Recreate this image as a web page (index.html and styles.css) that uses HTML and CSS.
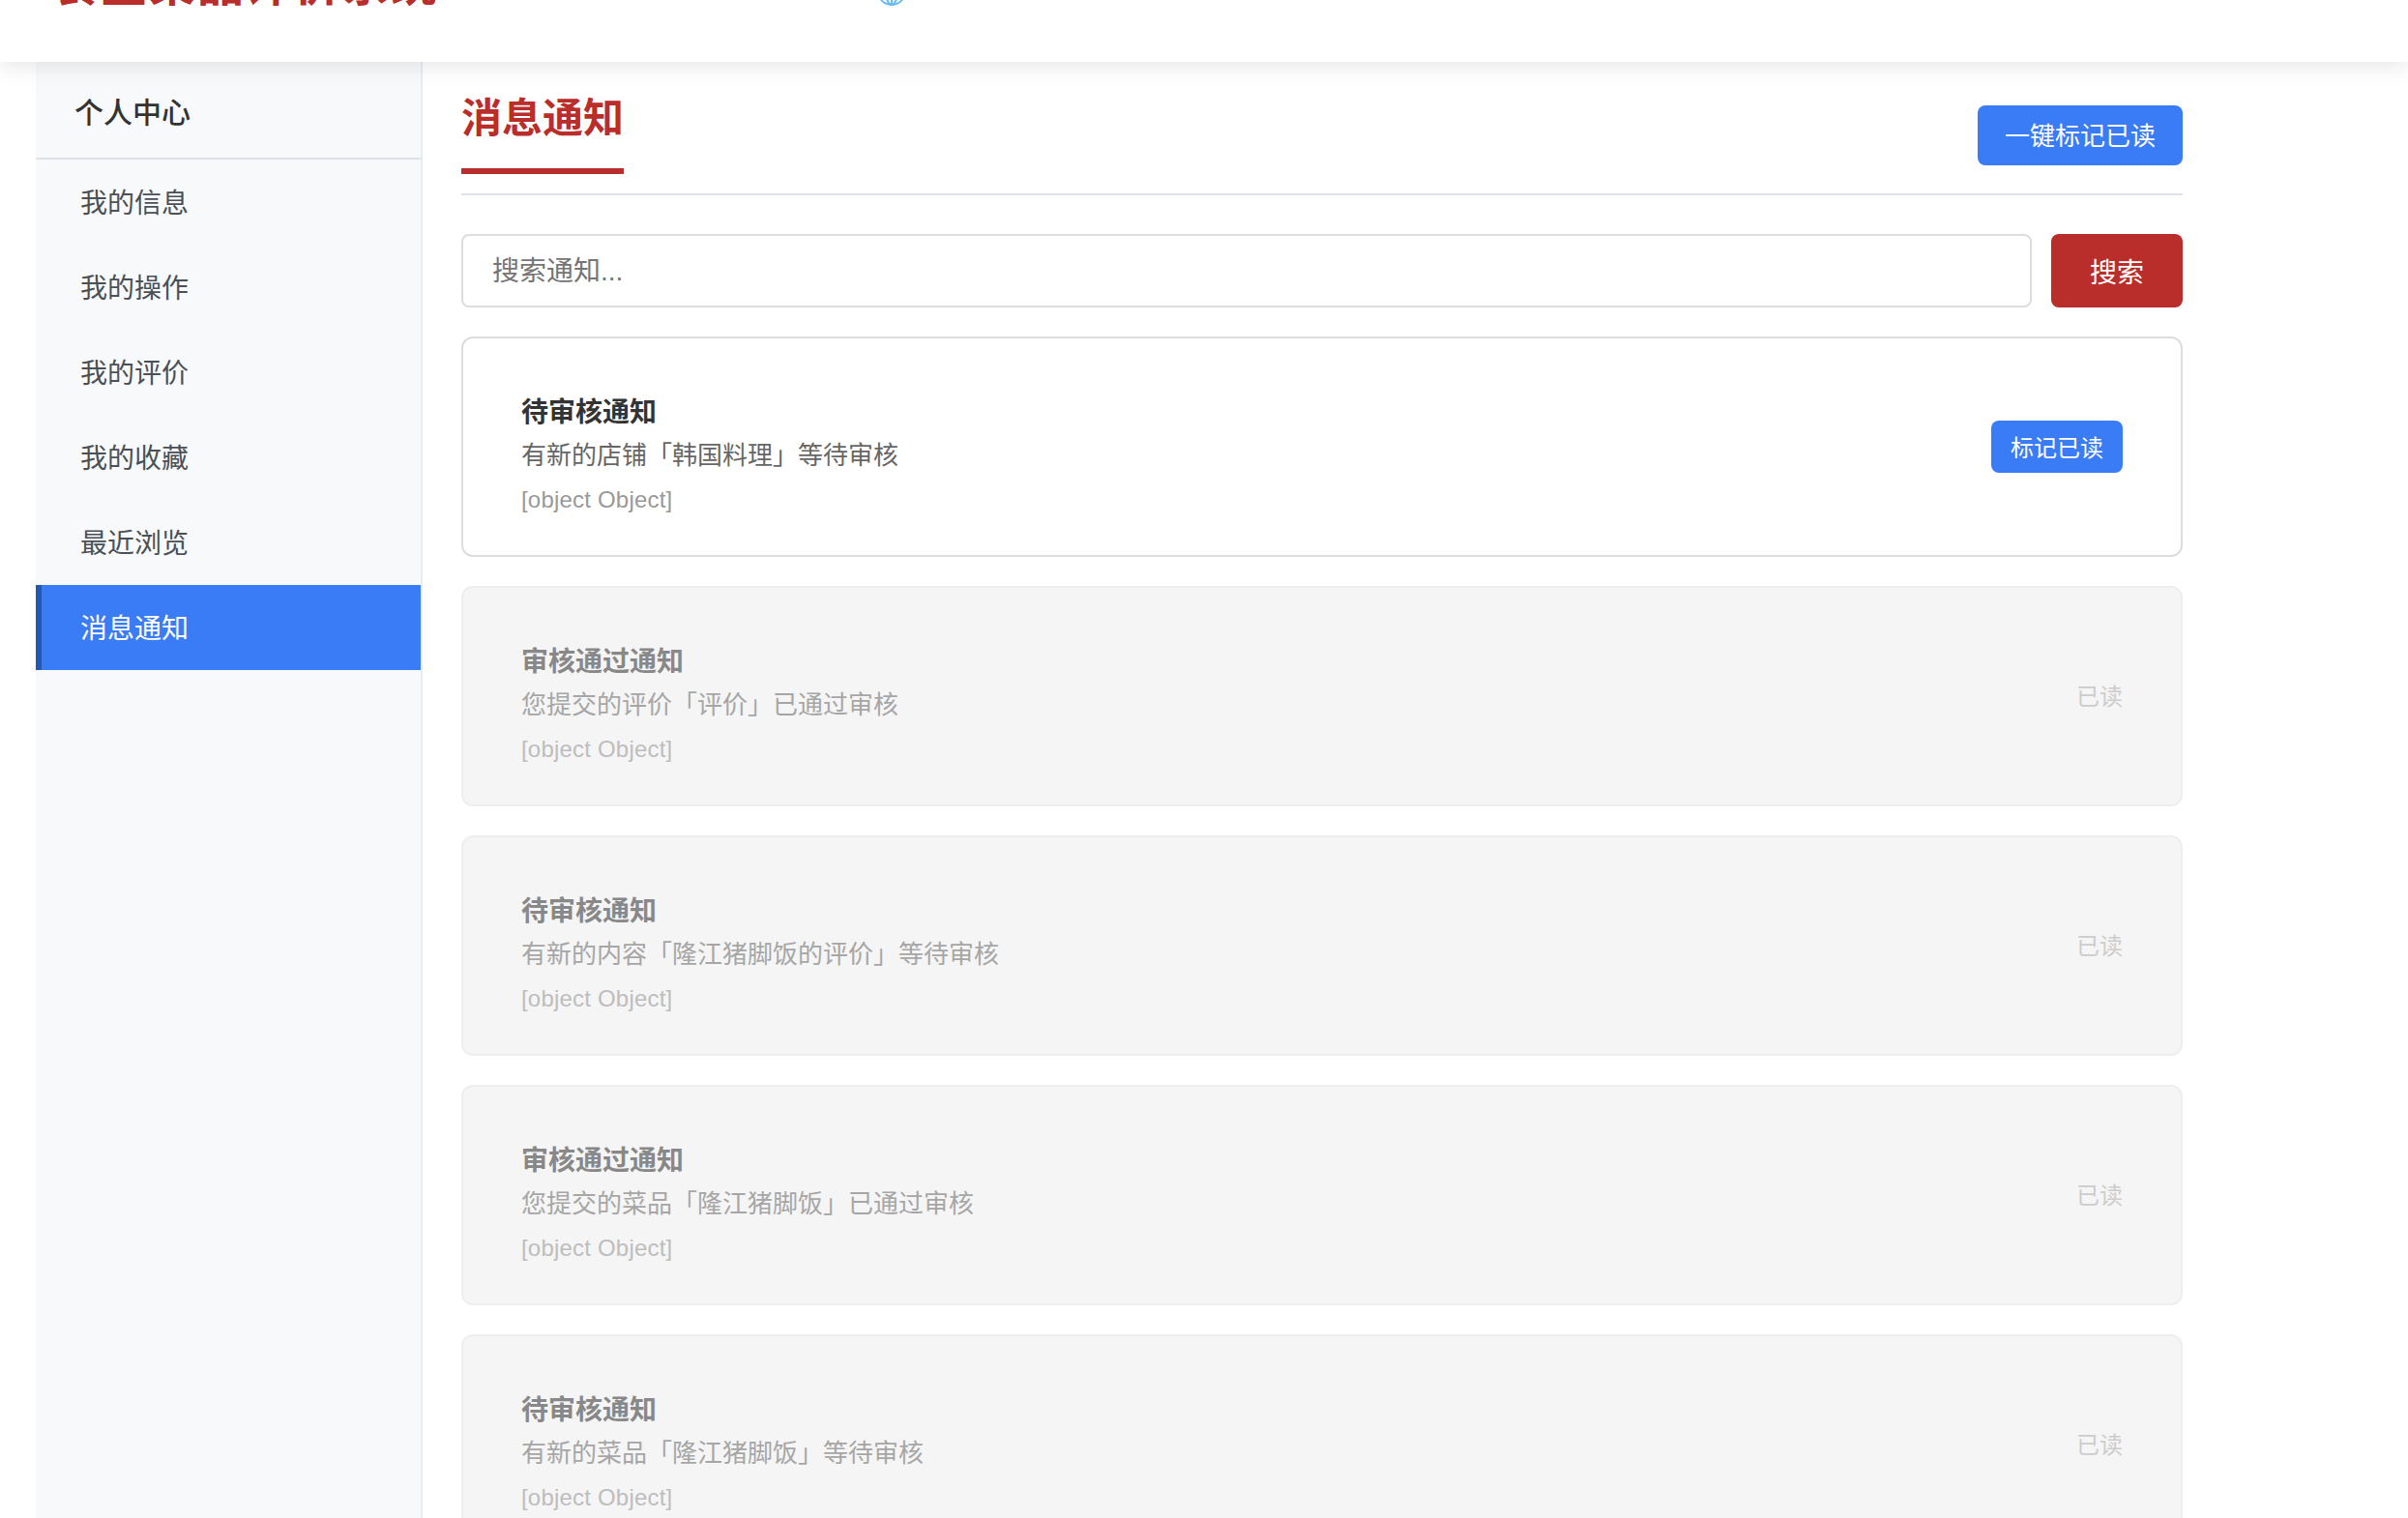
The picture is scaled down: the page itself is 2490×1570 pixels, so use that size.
FILE: index.html
```html
<!DOCTYPE html>
<html lang="zh-CN">
<head>
<meta charset="utf-8">
<title>消息通知</title>
<link rel="stylesheet" href="styles.css">
</head>
<body>
<header class="topbar">
  <h1 class="brand">食堂菜品评价系统</h1>
  <svg class="globe" width="30" height="30" viewBox="0 0 30 30" fill="none" stroke="#66bbf5" stroke-width="2"><circle cx="15" cy="15" r="14"/><ellipse cx="15" cy="15" rx="6" ry="14"/><path d="M15 1v28M2 21h26"/></svg>
</header>
<div class="layout">
  <aside class="sidebar">
    <div class="side-title">个人中心</div>
    <nav class="side-nav">
      <a class="side-item">我的信息</a>
      <a class="side-item">我的操作</a>
      <a class="side-item">我的评价</a>
      <a class="side-item">我的收藏</a>
      <a class="side-item">最近浏览</a>
      <a class="side-item active">消息通知</a>
    </nav>
  </aside>
  <main class="content">
    <div class="page-head">
      <h2 class="page-title">消息通知</h2>
      <button class="btn-all">一键标记已读</button>
    </div>
    <div class="search">
      <input class="search-input" type="text" placeholder="搜索通知...">
      <button class="search-btn">搜索</button>
    </div>
    <div class="list">
      <article class="card">
        <div class="card-body">
          <div class="card-title">待审核通知</div>
          <div class="card-desc">有新的店铺「韩国料理」等待审核</div>
          <div class="card-time">[object Object]</div>
        </div>
        <button class="btn-read">标记已读</button>
      </article>
      <article class="card read">
        <div class="card-body">
          <div class="card-title">审核通过通知</div>
          <div class="card-desc">您提交的评价「评价」已通过审核</div>
          <div class="card-time">[object Object]</div>
        </div>
        <span class="read-tag">已读</span>
      </article>
      <article class="card read">
        <div class="card-body">
          <div class="card-title">待审核通知</div>
          <div class="card-desc">有新的内容「隆江猪脚饭的评价」等待审核</div>
          <div class="card-time">[object Object]</div>
        </div>
        <span class="read-tag">已读</span>
      </article>
      <article class="card read">
        <div class="card-body">
          <div class="card-title">审核通过通知</div>
          <div class="card-desc">您提交的菜品「隆江猪脚饭」已通过审核</div>
          <div class="card-time">[object Object]</div>
        </div>
        <span class="read-tag">已读</span>
      </article>
      <article class="card read">
        <div class="card-body">
          <div class="card-title">待审核通知</div>
          <div class="card-desc">有新的菜品「隆江猪脚饭」等待审核</div>
          <div class="card-time">[object Object]</div>
        </div>
        <span class="read-tag">已读</span>
      </article>
    </div>
  </main>
</div>
</body>
</html>
```
FILE: styles.css
```css
* { box-sizing: border-box; }
html, body { margin: 0; padding: 0; height: 100%; overflow: hidden; background: #fff; }
body { font-family: "Liberation Sans", "Noto Sans CJK SC", sans-serif; color: #333; }

.topbar {
  position: relative;
  z-index: 2;
  height: 64px;
  background: #fff;
  box-shadow: 0 4px 24px rgba(0, 0, 0, 0.1);
  overflow: hidden;
}
.brand {
  position: absolute;
  left: 54px;
  bottom: 49px;
  margin: 0;
  font-size: 48px;
  letter-spacing: 2px;
  line-height: 60px;
  font-weight: 700;
  color: #b92d2a;
  white-space: nowrap;
}
.globe { position: absolute; left: 907px; top: -24px; }

.layout { display: flex; align-items: stretch; height: 1506px; margin-left: 37px; }
.sidebar {
  flex: 0 0 400px;
  background: #f8f9fa;
  border-right: 2px solid #e9ecef;
}
.side-title {
  height: 101px;
  padding: 33px 40px 0;
  font-size: 30px;
  line-height: 40px;
  font-weight: 500;
  color: #333;
  border-bottom: 2px solid #dee2e6;
}
.side-item {
  display: block;
  height: 88px;
  padding: 3px 0 0 46px;
  font-size: 28px;
  line-height: 85px;
  color: #495057;
}
.side-item.active {
  background: #3a7bf6;
  border-left: 6px solid #2058b4;
  padding-left: 40px;
  color: #fff;
}

.content { width: 1780px; margin-left: 40px; }
.page-head {
  display: flex;
  justify-content: space-between;
  align-items: flex-start;
  height: 138px;
  border-bottom: 2px solid #dee2e6;
}
.page-title {
  margin: 35px 0 0;
  height: 81px;
  border-bottom: 6px solid #b92d2a;
  padding: 0;
  font-size: 42px;
  line-height: 48px;
  font-weight: 700;
  color: #b92d2a;
}
.btn-all {
  margin-top: 45px;
  width: 212px;
  height: 62px;
  padding: 0 0 3px;
  background: #3a7bf6;
  border: 0;
  border-radius: 8px;
  color: #fff;
  font: inherit;
  font-size: 26px;
}

.search { display: flex; gap: 20px; margin-top: 40px; height: 76px; }
.search-input {
  flex: 1;
  min-width: 0;
  padding: 2px 30px 0;
  border: 2px solid #ddd;
  border-radius: 8px;
  background: #fff;
  font: inherit;
  font-size: 28px;
  color: #333;
  outline: none;
}
.search-input::placeholder { color: #757575; opacity: 1; }
.search-btn {
  flex: 0 0 136px;
  padding: 0 0 1px;
  background: #b92d2a;
  border: 0;
  border-radius: 8px;
  color: #fff;
  font: inherit;
  font-size: 28px;
}

.list { display: flex; flex-direction: column; gap: 30px; margin-top: 30px; }
.card {
  flex: 0 0 228px;
  display: flex;
  align-items: center;
  justify-content: space-between;
  padding: 0 60px;
  background: #fff;
  border: 2px solid #ddd;
  border-radius: 12px;
}
.card-body { padding-top: 20px; }
.card-title { font-size: 28px; line-height: 43px; font-weight: 700; color: #333; }
.card-desc { font-size: 26px; line-height: 46px; color: #666; }
.card-time { font-size: 24px; line-height: 46px; letter-spacing: 0.2px; color: #999; }
.btn-read {
  width: 136px;
  height: 54px;
  padding: 0 0 2px;
  background: #3a7bf6;
  border: 0;
  border-radius: 8px;
  color: #fff;
  font: inherit;
  font-size: 24px;
}
.card.read { background: #f5f5f5; border-color: #eee; }
.read .card-title { color: #888; }
.read .card-desc { color: #a6a6a6; }
.read .card-time { color: #bdbdbd; }
.read-tag { padding-bottom: 3px; font-size: 24px; color: #ccc; }
```
